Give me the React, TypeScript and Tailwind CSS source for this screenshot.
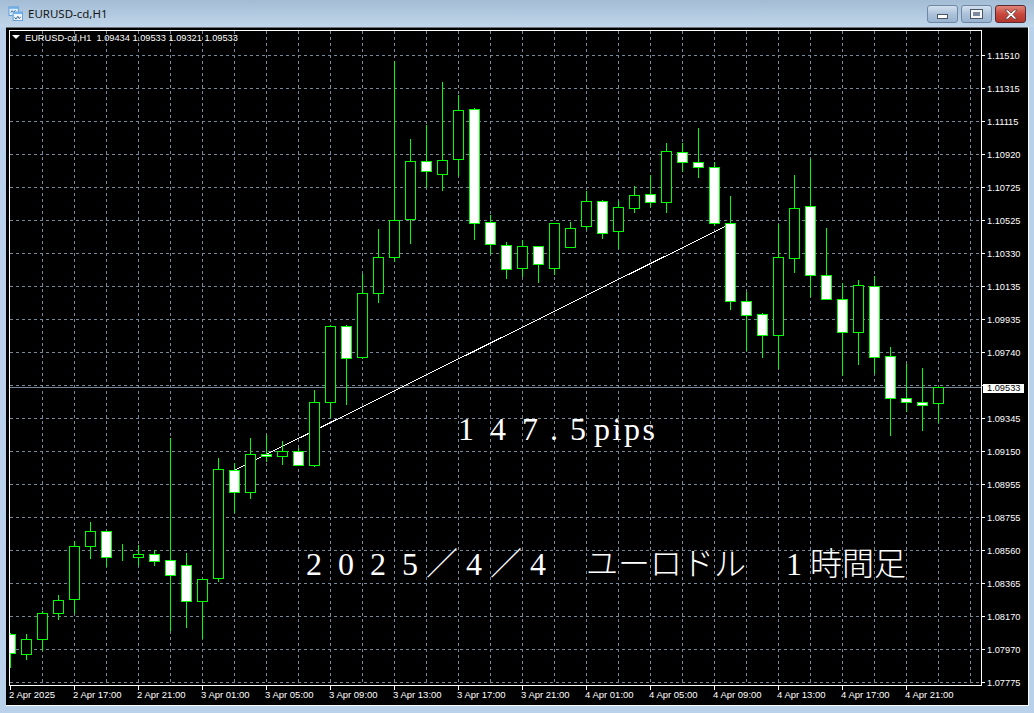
import React from "react";

// top, bottom, high, low, filled (white body)
const C: [number, number, number, number, number][] = [
  [634,653,633,668,1],[639,654,634,660,0],[613,639,611,651,0],[600,613,595,620,0],[546,599,541,614,0],
  [531,546,522,559,0],[531,557,531,567,1],[557,557,544,561,0],[554,557,545,566,0],[554,561,550,566,1],
  [560,575,438,631,1],[565,601,553,628,1],[579,601,579,639,0],[469,578,458,582,0],[470,492,463,513,1],
  [454,492,438,499,0],[454,456,435,462,1],[451,456,441,465,0],[451,465,448,465,1],[402,465,390,467,0],
  [326,402,325,418,0],[326,358,325,405,1],[293,357,274,359,0],[257,293,229,303,0],[220,257,61,262,0],
  [161,219,139,244,0],[161,171,125,188,1],[160,174,82,191,0],[110,159,95,176,0],[109,223,108,240,1],
  [222,244,215,254,1],[245,269,242,279,1],[246,268,240,277,0],[246,264,246,283,1],[223,268,223,275,0],
  [228,247,222,247,0],[201,226,191,230,0],[201,233,200,239,1],[207,231,201,249,0],[195,208,186,213,0],
  [194,202,175,207,1],[151,202,143,213,0],[152,162,143,172,1],[162,167,128,178,1],[167,223,162,226,1],
  [223,301,196,310,1],[301,315,292,351,1],[314,335,313,358,1],[257,335,224,369,0],[208,258,175,273,0],
  [206,275,159,297,1],[275,299,228,299,1],[299,332,283,376,1],[285,332,280,365,0],[286,357,276,374,1],
  [356,398,347,436,1],[398,402,364,412,1],[402,405,368,431,1],[387,403,387,423,0],
];

const prices = ["1.11510","1.11315","1.11115","1.10920","1.10725","1.10525","1.10330","1.10135","1.09935","1.09740","","1.09345","1.09150","1.08955","1.08755","1.08560","1.08365","1.08170","1.07970","1.07775"];
const times = ["2 Apr 2025","2 Apr 17:00","2 Apr 21:00","3 Apr 01:00","3 Apr 05:00","3 Apr 09:00","3 Apr 13:00","3 Apr 17:00","3 Apr 21:00","4 Apr 01:00","4 Apr 05:00","4 Apr 09:00","4 Apr 13:00","4 Apr 17:00","4 Apr 21:00"];

function Chart() {
  return (
    <svg className="block font-['Liberation_Sans',sans-serif]" width="1022" height="678" viewBox="6 27 1022 678">
      <g stroke="#778899" strokeDasharray="3 3" shapeRendering="crispEdges">
        {prices.map((_, i) => (
          <line key={i} x1="10" x2="981" y1={55.5 + 33 * i} y2={55.5 + 33 * i} />
        ))}
        {Array.from({ length: 30 }, (_, i) => (
          <line key={i} x1={42.5 + 32 * i} x2={42.5 + 32 * i} y1="31" y2="685" />
        ))}
      </g>
      <line x1="10" x2="981" y1="387.5" y2="387.5" stroke="#778899" shapeRendering="crispEdges" />
      <line x1="233" y1="471" x2="726" y2="226" stroke="#ffffff" shapeRendering="crispEdges" />
      <g shapeRendering="crispEdges">
        {C.map(([t, b, h, l, f], i) => {
          const cx = 10 + 16 * i;
          return (
            <g key={i}>
              <line x1={cx + 0.5} x2={cx + 0.5} y1={h} y2={l} stroke="#00ff00" />
              <rect x={i === 0 ? 9.5 : cx - 4.5} y={t + 0.5} width={i === 0 ? 6 : 10} height={b - t} fill={f ? "#ffffff" : "#000000"} stroke="#00ff00" />
            </g>
          );
        })}
      </g>
      <rect x="9.5" y="30.5" width="972" height="655" fill="none" stroke="#ffffff" shapeRendering="crispEdges" />
      <g stroke="#ffffff" shapeRendering="crispEdges">
        {prices.map((_, i) => (
          <line key={i} x1="982" x2="985" y1={55.5 + 33 * i} y2={55.5 + 33 * i} />
        ))}
        {times.map((_, i) => (
          <line key={i} x1={10.5 + 64 * i} x2={10.5 + 64 * i} y1="686" y2="690" />
        ))}
      </g>
      <g className="fill-white">
        {prices.map((p, i) =>
          p ? (
            <text key={i} x="987" y={59 + 33 * i} className="text-[9.25px]">
              {p}
            </text>
          ) : null
        )}
        {times.map((t, i) => (
          <text key={i} x={9 + 64 * i} y="698" className="text-[9.5px]">
            {t}
          </text>
        ))}
      </g>
      <rect x="983" y="384" width="41" height="9" fill="#ffffff" />
      <text x="987" y="391" className="fill-black text-[9.25px]">
        1.09533
      </text>
    </svg>
  );
}

function WinIcon() {
  return (
    <svg width="15" height="15" viewBox="0 0 16 16" className="shrink-0">
      <rect x="1" y="1" width="10" height="9" fill="#dcecfa" stroke="#5d9bd6" />
      <rect x="1" y="1" width="10" height="2" fill="#6fb0e8" />
      <path d="M3 7l1.5-2 1.5 2 2-2.5" fill="none" stroke="#3b5f8a" />
      <rect x="5.5" y="6.5" width="10" height="9" fill="#eef6fd" stroke="#5d9bd6" />
      <rect x="5.5" y="6.5" width="10" height="2" fill="#6fb0e8" />
      <path d="M7 12l1.5 2 2-3 1.5 2.5 1.5-2" fill="none" stroke="#3b5f8a" />
    </svg>
  );
}

function Cell({ children }: { children: React.ReactNode }) {
  return <span className="inline-block w-[32px] pl-[8px]">{children}</span>;
}

export default function App() {
  return (
    <div className="relative flex h-[713px] w-[1034px] flex-col overflow-hidden bg-[#b9d1ea] font-['Noto_Sans',sans-serif]">
      <div className="flex h-[27px] shrink-0 items-center bg-gradient-to-b from-[#a3bdd5] to-[#c0d6ea] pl-[8px] pr-[8px]">
        <WinIcon />
        <span className="ml-[5px] text-[11.5px] text-[#161616]">EURUSD-cd,H1</span>
        <div className="ml-auto flex gap-[3px] self-start pt-[5px]">
          <div className="flex h-[18px] w-[31px] items-center justify-center rounded-[3px] border border-[#6f87a5] bg-gradient-to-b from-[#d3e1ef] via-[#adc3da] to-[#98b3cf]">
            <div className="mt-[4px] h-[5px] w-[11px] border border-[#4a5565] bg-white" />
          </div>
          <div className="flex h-[18px] w-[31px] items-center justify-center rounded-[3px] border border-[#6f87a5] bg-gradient-to-b from-[#d3e1ef] via-[#adc3da] to-[#98b3cf]">
            <div className="h-[8px] w-[11px] border-2 border-[#f4f6f8] bg-[#7c8ba0] outline outline-1 outline-[#4a5565]" />
          </div>
          <div className="flex h-[18px] w-[31px] items-center justify-center rounded-[3px] border border-[#5c2a30] bg-gradient-to-b from-[#e08478] via-[#c9483d] to-[#b5362c]">
            <svg width="14" height="11" viewBox="0 0 14 11">
              <path d="M1 1h3l3 3 3-3h3l-4 4.5 4 4.5h-3L7 7 4 10H1l4-4.5z" fill="#f4f4f4" stroke="#4a3a3a" strokeWidth="0.7" />
            </svg>
          </div>
        </div>
      </div>
      <div className="relative ml-[6px] h-[678px] w-[1022px] bg-black">
        <Chart />
        <div className="absolute left-0 top-0 h-[1px] w-full bg-[#6d7276]" />
        <div className="absolute left-[6px] top-[8px] h-0 w-0 border-x-[4px] border-t-[4px] border-x-transparent border-t-white" />
        <div className="absolute left-[19px] top-[5px] whitespace-pre font-['Liberation_Sans',sans-serif] text-[9.25px] leading-[12px] text-white">
          EURUSD-cd,H1{"  "}1.09434 1.09533 1.09321 1.09533
        </div>
        <div className="absolute left-[444px] top-[384px] whitespace-pre font-['Liberation_Serif','Noto_Sans_CJK_JP',serif] text-[32px] font-light leading-[36px] text-white">
          <Cell>1</Cell>
          <Cell>4</Cell>
          <Cell>7</Cell>
          <span className="inline-block w-[16px] text-center">.</span>
          <Cell>5</Cell>
          <span className="tracking-[2.5px]">pips</span>
        </div>
        <div className="absolute left-[292px] top-[519px] whitespace-pre font-['Liberation_Serif','Noto_Sans_CJK_JP',serif] text-[32px] font-light leading-[36px] text-white">
          <Cell>2</Cell>
          <Cell>0</Cell>
          <Cell>2</Cell>
          <Cell>5</Cell>／<Cell>4</Cell>／<Cell>4</Cell>
          {"　"}ユーロドル{"　"}
          <Cell>1</Cell>時間足
        </div>
      </div>
      <div className="ml-[6px] h-[1px] w-[1022px] bg-white" />
      <div className="absolute right-[5px] top-[27px] h-[679px] w-[1px] bg-white" />
    </div>
  );
}
